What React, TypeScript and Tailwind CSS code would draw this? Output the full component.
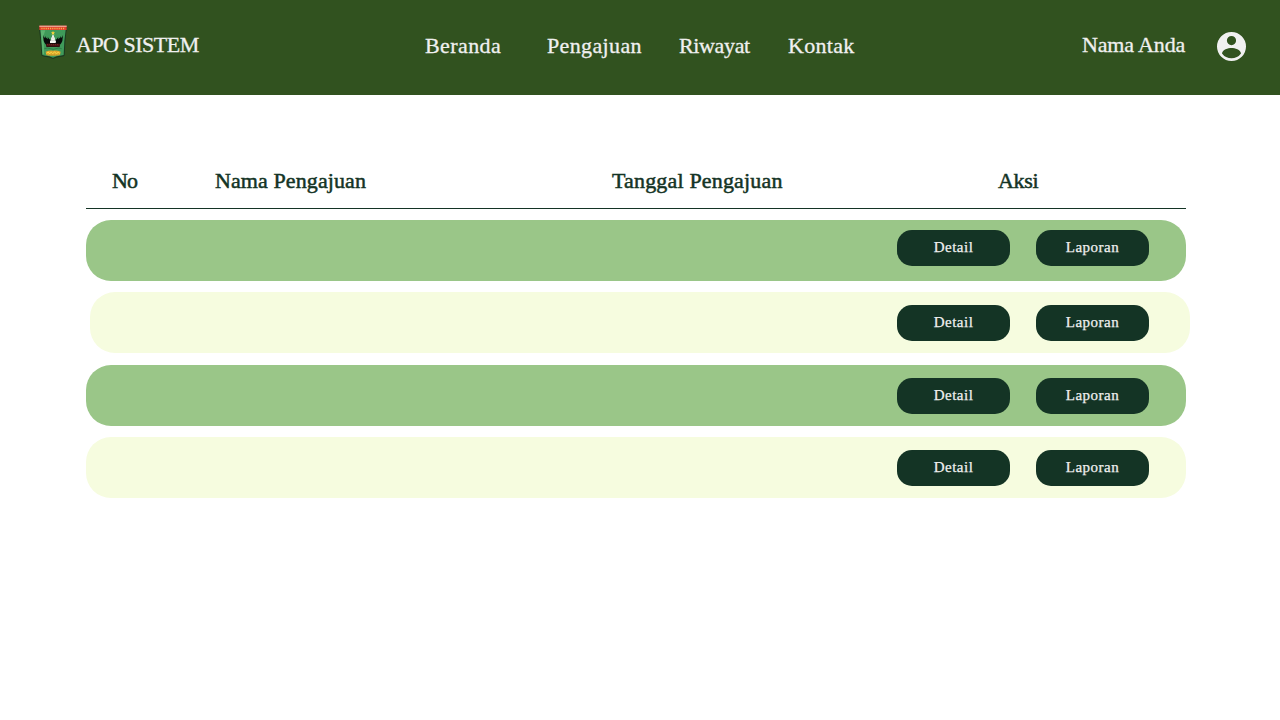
const navItems = [
  { label: 'Beranda', className: 'w-[122px] tracking-[0.4px]' },
  { label: 'Pengajuan', className: 'w-[132px] tracking-[0.36px]' },
  { label: 'Riwayat', className: 'w-[109px] tracking-[-0.35px]' },
  { label: 'Kontak', className: 'w-[80px] tracking-[0.3px]' },
];

const columns = [
  { label: 'No', className: 'w-[103px] tracking-[-0.8px]' },
  { label: 'Nama Pengajuan', className: 'w-[397px] tracking-[0.1px]' },
  { label: 'Tanggal Pengajuan', className: 'w-[386px] tracking-[0.17px]' },
  { label: 'Aksi', className: 'w-[60px] tracking-[-0.3px]' },
];

const rows = [
  { id: 1, className: 'mt-[11px] bg-[#9ac688] pr-[37px] pt-[10px]' },
  { id: 2, className: 'mt-[11px] ml-1 bg-[#f6fcdf] pr-[41px] pt-[13px]' },
  { id: 3, className: 'mt-3 bg-[#9ac688] pr-[37px] pt-[13px]' },
  { id: 4, className: 'mt-[11px] bg-[#f6fcdf] pr-[37px] pt-[13px]' },
];

function Crest() {
  return (
    <svg className="mt-[25px] h-[34px] w-[28px] shrink-0" viewBox="27 27 84 102" aria-hidden="true">
      <path d="M27 29H111V41L109 47L106 77L104 118Q102 123 88 123Q78 124 69 129Q60 124 50 123Q36 122 34 118L31 72L28 47Z" fill="#1c3820" />
      <path d="M31 42H107L103 76L101 117Q89 120 80 121L69 125L58 121Q45 120 37 117L34 76Z" fill="#3f9a5a" />
      <path d="M32 43H46L41 58L42 115L38 115L35 75Z" fill="#5db371" />
      <path d="M28 29H110V42H28Z" fill="#e2402f" />
      <path d="M28 29H110V32.5H28Z" fill="#f0b4a2" />
      <path d="M34 37.5H105" stroke="#f6b24c" strokeWidth="5" strokeDasharray="3.5 3" />
      <path d="M39 57Q41 64 46 67L45 60Q49 67 54 69L53 62Q57 70 62 72H76Q81 70 85 62L84 69Q89 67 93 60L92 67Q97 64 99 57L97 75Q94 83 90 86L88 93H50L48 86Q44 83 41 75Z" fill="#080a0a" />
      <path d="M49 83H89V92H49Z" fill="#491415" />
      <path d="M51 86H88" stroke="#8d2e29" strokeWidth="2" strokeDasharray="3 3" />
      <path d="M67.5 56H70.5L72 62L75 67L74 70L78 76L77 81H60V76L64 70L63 67L66 62Z" fill="#f6f7f3" />
      <path d="M62 73H76M65 66H73" stroke="#8b938c" strokeWidth="1" />
      <path d="M69 45L71 49H75L72 52L73 57L69 54L65 57L66 52L63 49H67Z" fill="#f5d43b" />
      <path d="M43 98Q52 94 61 98T78 98T95 98" fill="none" stroke="#23703e" strokeWidth="2" />
      <path d="M47 107Q56 103 69 104Q83 103 92 107L90 117Q78 120 69 119Q56 120 49 117Z" fill="#e0a52b" />
      <path d="M50 112L55 108L58 113L64 109L68 113L74 108L79 113L85 109L89 112" fill="none" stroke="#f7de4c" strokeWidth="3" />
      <path d="M50 117H89" stroke="#8b8d31" strokeWidth="1.5" strokeDasharray="4 3" />
    </svg>
  );
}

function AccountIcon() {
  return (
    <svg className="mt-8 ml-auto size-[29px] shrink-0" viewBox="0 0 29 29" aria-hidden="true">
      <path
        fill="#f0f0f0"
        fillRule="evenodd"
        d="M14.5 0a14.5 14.5 0 1 1 0 29a14.5 14.5 0 1 1 0-29ZM14.5 4a4.6 4.6 0 1 0 0 9.2a4.6 4.6 0 1 0 0-9.2ZM5 21.4C5.4 17.8 11 16 14.5 16S23.6 17.8 24 21.4A11.6 11.6 0 0 1 5 21.4Z"
      />
    </svg>
  );
}

function ActionButton({ children }: { children: string }) {
  return (
    <button className="h-9 w-[113px] rounded-[15px] bg-[#143425] pb-[2px] text-center text-[15px] leading-[18px] tracking-[0.5px] text-[#f0f0f0] [-webkit-text-stroke:0.25px_#f0f0f0]">
      {children}
    </button>
  );
}

export default function App() {
  return (
    <div className="min-h-[720px] w-full bg-white font-['Liberation_Serif',serif] text-[22px] leading-6 whitespace-nowrap">
      <header className="flex h-[95px] bg-[#31521f] pr-[34px] pl-[39px] text-[#f0f0f0] [-webkit-text-stroke:0.3px_#f0f0f0]">
        <Crest />
        <div className="mt-[33px] ml-[9px] w-[349px] tracking-[-0.5px]">APO SISTEM</div>
        <nav className="mt-[34px] flex">
          {navItems.map((item) => (
            <a key={item.label} href="#" className={item.className}>
              {item.label}
            </a>
          ))}
        </nav>
        <div className="mt-[33px] ml-[214px] tracking-[-0.15px]">Nama Anda</div>
        <AccountIcon />
      </header>

      <main className="ml-[86px] w-[1100px] pt-[74px]">
        <div className="flex h-10 border-b border-[#143425] pl-[26px] text-[#143425] [-webkit-text-stroke:0.5px_#143425]">
          {columns.map((column) => (
            <div key={column.label} className={column.className}>
              {column.label}
            </div>
          ))}
        </div>
        {rows.map((row) => (
          <div key={row.id} className={`flex h-[61px] w-[1100px] items-start justify-end gap-[26px] rounded-[25px] ${row.className}`}>
            <ActionButton>Detail</ActionButton>
            <ActionButton>Laporan</ActionButton>
          </div>
        ))}
      </main>
    </div>
  );
}
